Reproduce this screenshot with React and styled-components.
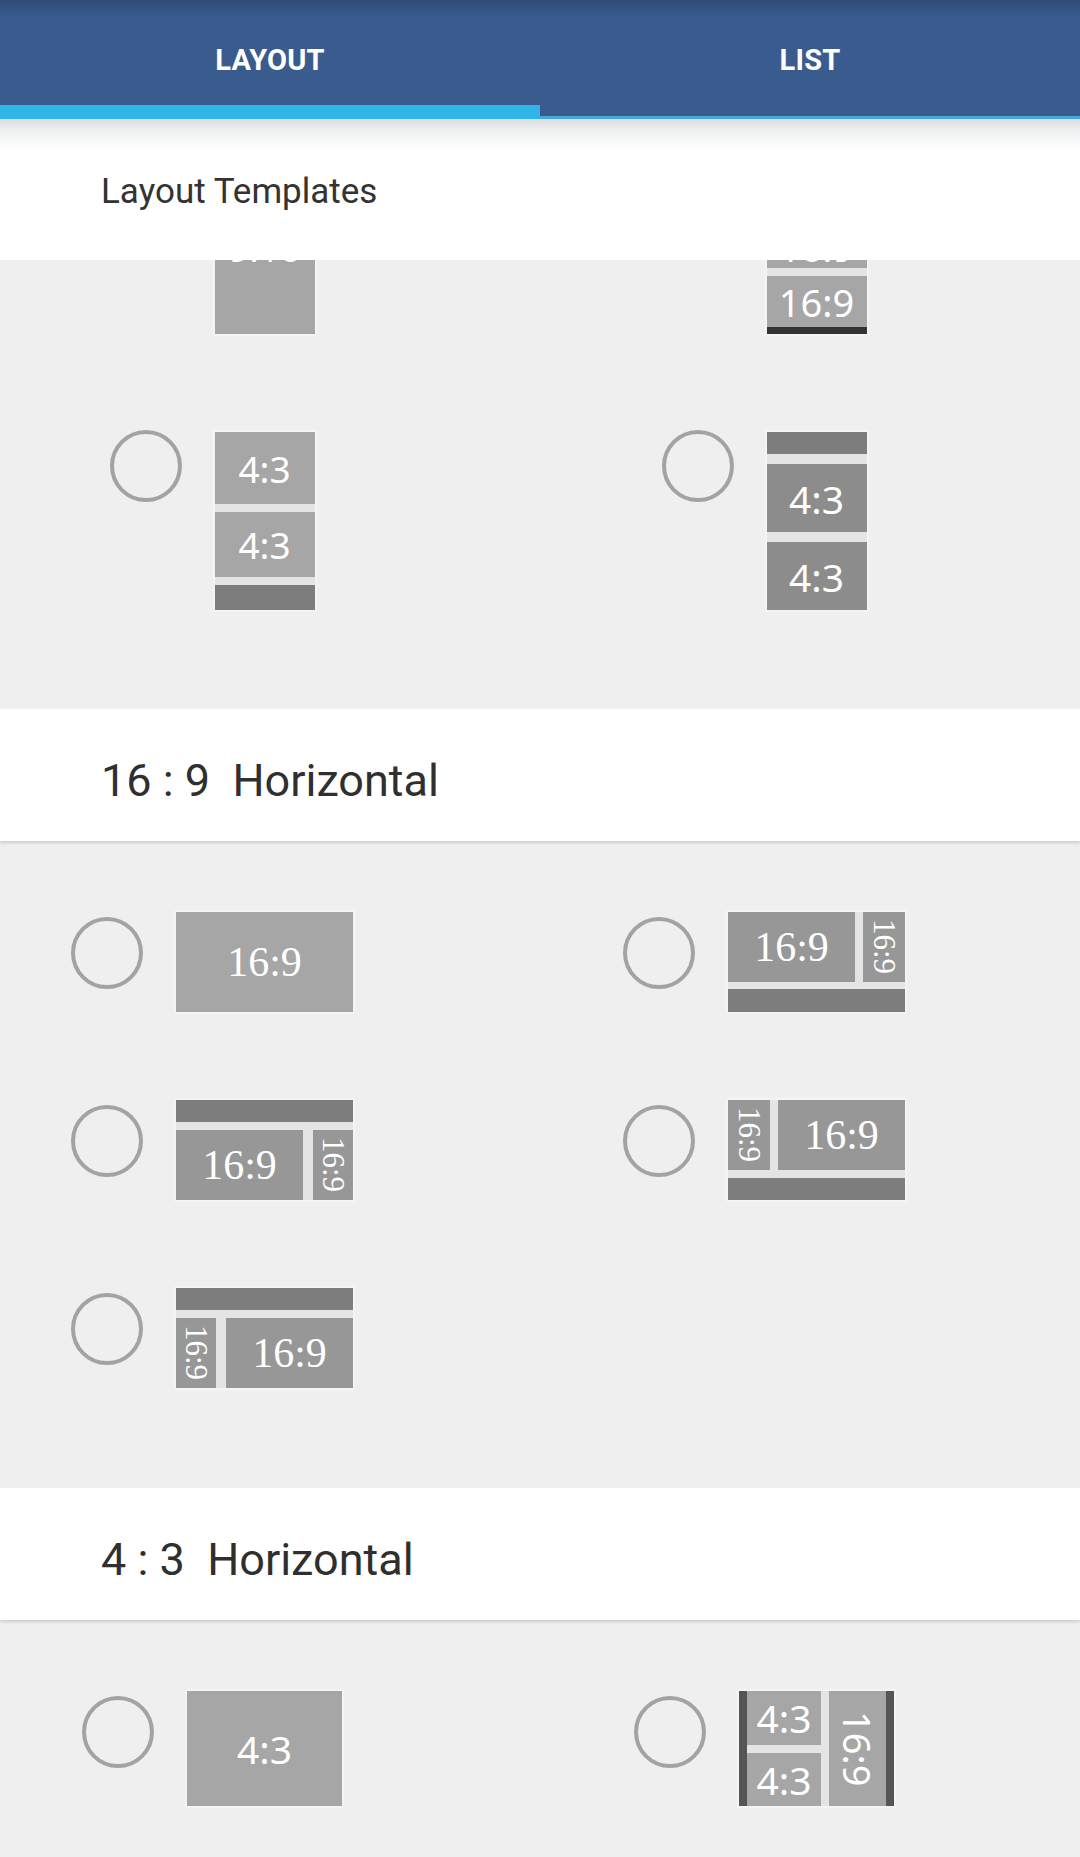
import React from "react";
import styled, { createGlobalStyle, css } from "styled-components";

const GlobalStyle = createGlobalStyle`
  html, body { margin: 0; padding: 0; background: #efefef; }
  body { font-family: Roboto, "Noto Sans", sans-serif; }
  *, *::before, *::after { box-sizing: border-box; }
`;

const tones = {
  light: "#a6a6a6",
  mid: "#979797",
  deep: "#8c8c8c",
  bar: "#7d7d7d",
  edge: "#555555",
  black: "#333333",
};

const fonts = {
  sans: '"Noto Sans", "Open Sans", sans-serif',
  serif: '"Liberation Serif", "DejaVu Serif", serif',
};

const Screen = styled.div`
  width: 1080px;
  height: 1857px;
  overflow: hidden;
  background: #efefef;
`;

const TabBar = styled.div`
  display: flex;
  height: 119px;
  background: linear-gradient(#304b77 0, #3a5b8e 16px, #3a5b8e 100%);
  position: relative;
  z-index: 2;
`;

const Tab = styled.div`
  flex: 1 1 0;
  position: relative;
  text-align: center;
  padding-top: 43px;
  color: #ffffff;
  font: 700 29px/35px Roboto, sans-serif;
  letter-spacing: 0.2px;
  border-bottom: ${(p) => (p.$active ? "14px solid #2fb5e8" : "3px solid #44a6dd")};
  & + &::before {
    content: "";
    position: absolute;
    left: 0;
    top: 20px;
    bottom: -3px;
    width: 1px;
    background: #2c4773;
  }
`;

const StickyTitle = styled.div`
  height: 141px;
  padding: 52px 0 0 101px;
  background: linear-gradient(#d9dde1 0, #eef0f1 12px, #ffffff 30px);
  font: 400 35px/41px Roboto, sans-serif;
  color: #333333;
  position: relative;
  z-index: 1;
`;

const SectionHeader = styled.div`
  height: 132px;
  padding: 45px 0 0 101px;
  background: #ffffff;
  font: 400 45px/53px Roboto, sans-serif;
  color: #2f2f2f;
  white-space: pre;
  position: relative;
  z-index: 1;
  box-shadow: 0 2px 3px rgba(0, 0, 0, 0.14);
`;

const Viewport = styled.div`
  overflow: hidden;
`;

const OptionGrid = styled.div`
  display: grid;
  grid-template-columns: repeat(2, 424px);
  column-gap: 128px;
  justify-items: center;
  align-items: start;
  row-gap: ${(p) => p.$rowGap}px;
  padding: ${(p) => p.$pt}px 0 ${(p) => p.$pb}px;
  margin-top: ${(p) => p.$shift || 0}px;
`;

const Option = styled.div`
  display: flex;
  align-items: flex-start;
  gap: 33px;
`;

const Radio = styled.span`
  width: 72px;
  height: 72px;
  flex-shrink: 0;
  border-radius: 50%;
  border: 4px solid #a3a3a3;
  margin-top: ${(p) => p.$offset}px;
`;

const Frame = styled.div`
  display: flex;
  flex-direction: ${(p) => p.$dir || "column"};
  gap: ${(p) => p.$gap ?? 8}px;
  width: ${(p) => p.$w}px;
  height: ${(p) => p.$h}px;
  flex-shrink: 0;
  background: #e4e4e4;
  box-shadow: 0 0 0 2px #f4f4f4;
`;

const Stack = styled.div`
  display: flex;
  flex-direction: ${(p) => p.$dir || "column"};
  gap: ${(p) => p.$gap ?? 8}px;
  flex: ${(p) => (p.$size ? `0 0 ${p.$size}px` : "1 1 0")};
  min-width: 0;
  min-height: 0;
`;

const Panel = styled.div`
  background: ${(p) => tones[p.$tone]};
  flex: ${(p) => (p.$size ? `0 0 ${p.$size}px` : "1 1 0")};
  display: flex;
  align-items: center;
  justify-content: center;
  overflow: hidden;
  min-width: 0;
  min-height: 0;
`;

const Label = styled.span`
  color: #ffffff;
  white-space: nowrap;
  line-height: 1;
  font-family: ${(p) => fonts[p.$font || "sans"]};
  font-size: ${(p) => p.$fs}px;
  margin-top: ${(p) => (p.$drop ? p.$drop * 2 : 0)}px;
  ${(p) =>
    p.$vertical &&
    css`
      writing-mode: vertical-rl;
    `}
`;

const Tile = ({ tone, size, text, font, fs, vertical, drop }) => (
  <Panel $tone={tone} $size={size}>
    {text && (
      <Label $font={font} $fs={fs} $vertical={vertical} $drop={drop}>
        {text}
      </Label>
    )}
  </Panel>
);

const Choice = ({ offset, children }) => (
  <Option>
    <Radio $offset={offset} />
    {children}
  </Option>
);

/* 16:9 tiles */
const Wide = (props) => <Tile tone="mid" size={127} text="16:9" font="serif" fs={42} {...props} />;
const Side = (props) => <Tile tone="mid" text="16:9" font="serif" fs={31} vertical {...props} />;

export default function App() {
  return (
    <Screen>
      <GlobalStyle />
      <TabBar>
        <Tab $active>LAYOUT</Tab>
        <Tab>LIST</Tab>
      </TabBar>

      <StickyTitle>Layout Templates</StickyTitle>

      <Viewport>
        <OptionGrid $rowGap={98} $pt={0} $pb={99} $shift={-104}>
          <Choice offset={-2}>
            <Frame $w={100} $h={178}>
              <Tile tone="light" text="9:16" fs={36} drop={4} />
            </Frame>
          </Choice>
          <Choice offset={-2}>
            <Frame $w={100} $h={178}>
              <Tile tone="light" text="16:9" fs={38} drop={35} />
              <Stack $size={58} $gap={0}>
                <Tile tone="light" text="16:9" fs={38} />
                <Tile tone="black" size={7} />
              </Stack>
            </Frame>
          </Choice>
          <Choice offset={-2}>
            <Frame $w={100} $h={178}>
              <Tile tone="light" size={72} text="4:3" fs={37} />
              <Tile tone="light" size={65} text="4:3" fs={37} />
              <Tile tone="bar" />
            </Frame>
          </Choice>
          <Choice offset={-2}>
            <Frame $w={100} $h={178} $gap={10}>
              <Tile tone="bar" size={22} />
              <Tile tone="deep" text="4:3" fs={39} />
              <Tile tone="deep" text="4:3" fs={39} />
            </Frame>
          </Choice>
        </OptionGrid>
      </Viewport>

      <SectionHeader>{"16 : 9  Horizontal"}</SectionHeader>
      <OptionGrid $rowGap={88} $pt={71} $pb={100}>
        <Choice offset={5}>
          <Frame $w={177} $h={100}>
            <Tile tone="light" text="16:9" font="serif" fs={42} />
          </Frame>
        </Choice>
        <Choice offset={5}>
          <Frame $w={177} $h={100} $gap={7}>
            <Stack $dir="row" $gap={8}>
              <Wide />
              <Side />
            </Stack>
            <Tile tone="bar" size={23} />
          </Frame>
        </Choice>
        <Choice offset={5}>
          <Frame $w={177} $h={100}>
            <Tile tone="bar" size={22} />
            <Stack $dir="row" $gap={10}>
              <Wide />
              <Side />
            </Stack>
          </Frame>
        </Choice>
        <Choice offset={5}>
          <Frame $w={177} $h={100}>
            <Stack $dir="row" $gap={8}>
              <Side />
              <Wide />
            </Stack>
            <Tile tone="bar" size={22} />
          </Frame>
        </Choice>
        <Choice offset={5}>
          <Frame $w={177} $h={100}>
            <Tile tone="bar" size={22} />
            <Stack $dir="row" $gap={10}>
              <Side />
              <Wide />
            </Stack>
          </Frame>
        </Choice>
      </OptionGrid>

      <SectionHeader>{"4 : 3  Horizontal"}</SectionHeader>
      <OptionGrid $rowGap={88} $pt={71} $pb={100}>
        <Choice offset={5}>
          <Frame $w={155} $h={115}>
            <Tile tone="light" text="4:3" fs={39} />
          </Frame>
        </Choice>
        <Choice offset={5}>
          <Frame $w={155} $h={115} $dir="row" $gap={0}>
            <Tile tone="edge" size={8} />
            <Stack $dir="row" $gap={8}>
              <Stack $size={74} $gap={8}>
                <Tile tone="light" text="4:3" fs={39} />
                <Tile tone="light" text="4:3" fs={39} />
              </Stack>
              <Tile tone="light" text="16:9" fs={38} vertical />
            </Stack>
            <Tile tone="edge" size={8} />
          </Frame>
        </Choice>
      </OptionGrid>
    </Screen>
  );
}
